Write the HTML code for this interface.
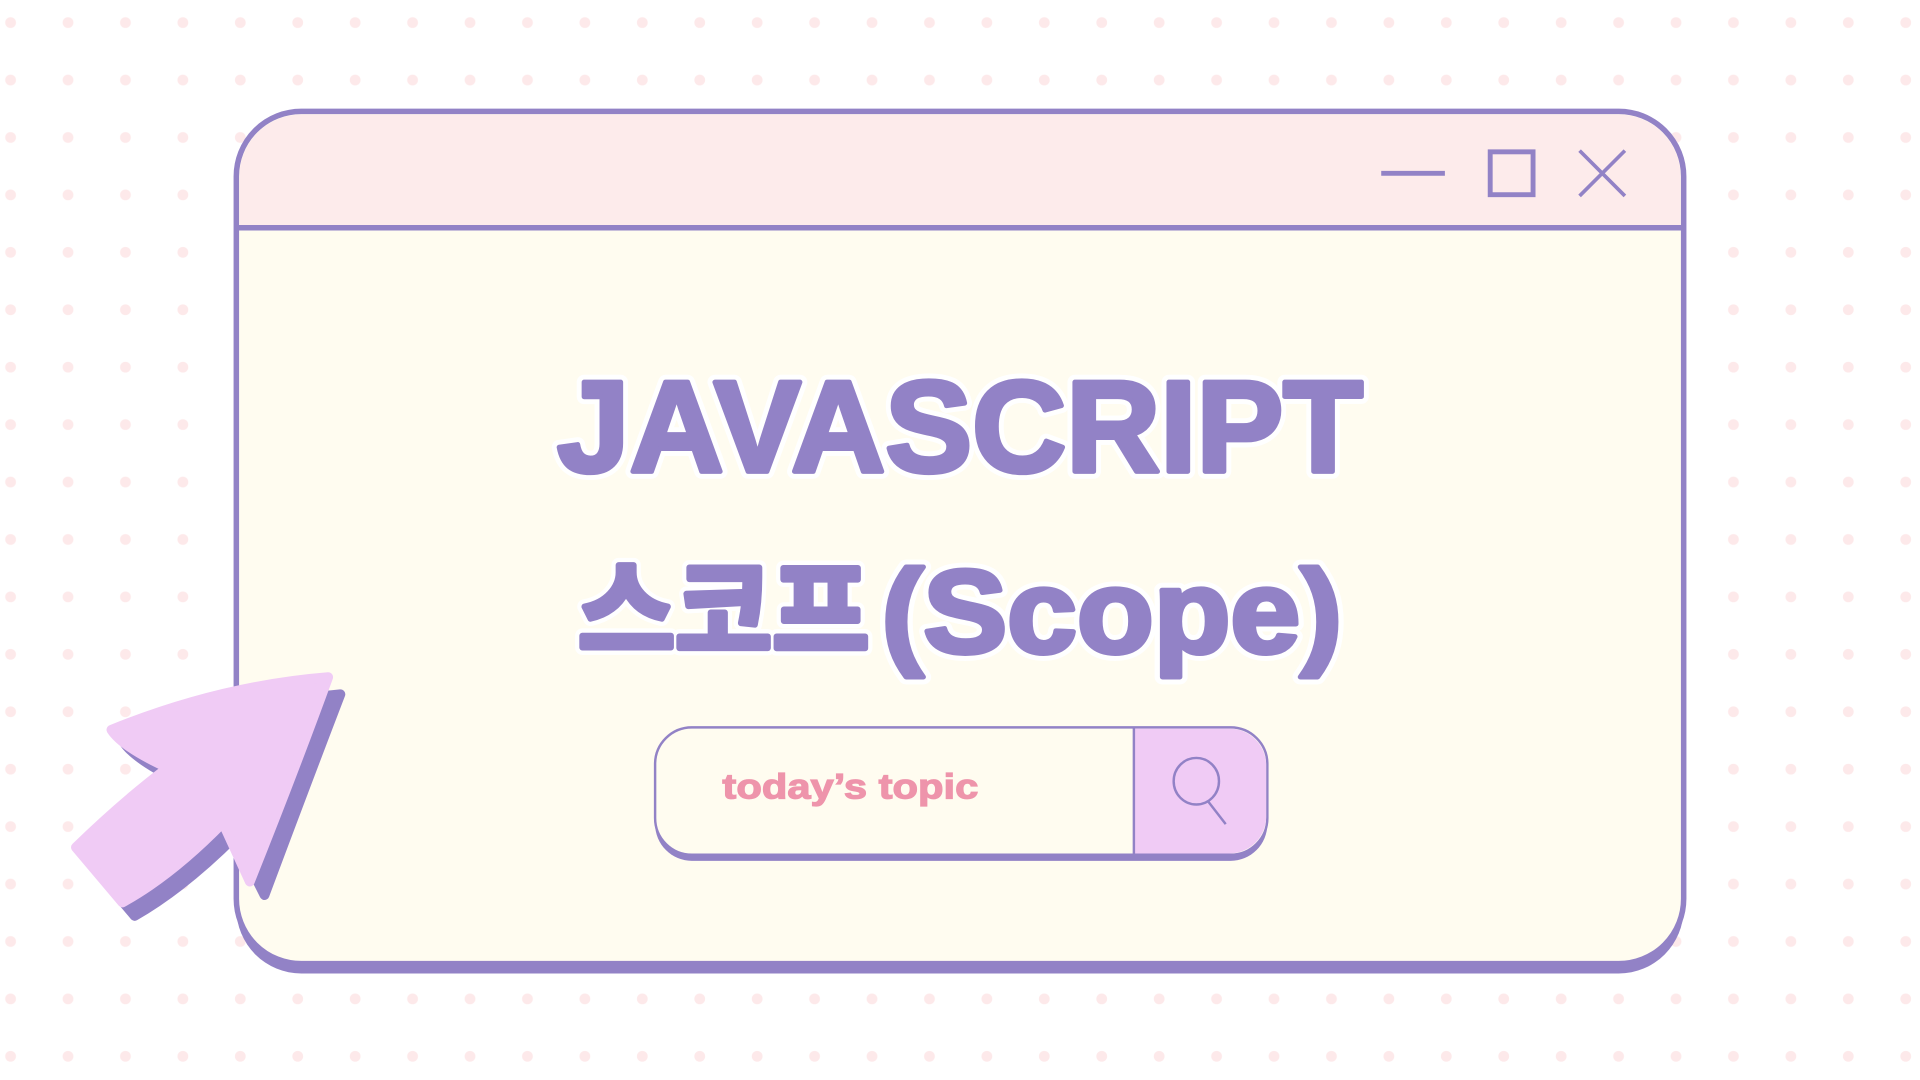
<!DOCTYPE html>
<html><head><meta charset="utf-8"><style>html,body{margin:0;padding:0;background:#fff;overflow:hidden}svg{display:block}</style></head>
<body>
<svg width="1920" height="1080" viewBox="0 0 1568 882" xmlns="http://www.w3.org/2000/svg">
<defs>
<pattern id="d" x="-14.8" y="-5" width="46.9" height="46.9" patternUnits="userSpaceOnUse">
<circle cx="23.45" cy="23.45" r="4.4" fill="#fde9ea"/>
</pattern>
</defs>
<rect width="1568" height="882" fill="#fff"/>
<rect width="1568" height="882" fill="url(#d)"/>
<!-- window -->
<rect x="193" y="99" width="1182" height="696" rx="53" fill="#9282c6"/>
<rect x="193" y="91" width="1182" height="696" rx="53" fill="#fffcf0" stroke="#9282c6" stroke-width="4.5"/>
<path d="M195.5 186 V144 A50.5 50.5 0 0 1 246 93.5 H1322 A50.5 50.5 0 0 1 1372.5 144 V186 Z" fill="#fdebeb"/>
<line x1="193" y1="186" x2="1375" y2="186" stroke="#9282c6" stroke-width="4.5"/>
<!-- controls -->
<line x1="1128" y1="141.5" x2="1180" y2="141.5" stroke="#9282c6" stroke-width="4"/>
<rect x="1217" y="124" width="35" height="35" fill="none" stroke="#9282c6" stroke-width="4"/>
<path d="M1290 123 L1327 160 M1327 123 L1290 160" stroke="#9282c6" stroke-width="3"/>
<!-- titles -->
<g font-family="Liberation Sans, sans-serif" font-weight="bold" stroke-linejoin="round">
<text x="455" y="385" textLength="658" lengthAdjust="spacingAndGlyphs" font-size="106" fill="#fff" stroke="#fff" stroke-width="12">JAVASCRIPT</text>
<text x="455" y="385" textLength="658" lengthAdjust="spacingAndGlyphs" font-size="106" fill="#9282c6" stroke="#9282c6" stroke-width="4">JAVASCRIPT</text>
<text x="472" y="531" textLength="238" lengthAdjust="spacingAndGlyphs" font-family="Noto Sans CJK KR, sans-serif" font-size="88" fill="#fff" stroke="#fff" stroke-width="12">스코프</text>
<text x="472" y="531" textLength="238" lengthAdjust="spacingAndGlyphs" font-family="Noto Sans CJK KR, sans-serif" font-size="88" fill="#9282c6" stroke="#9282c6" stroke-width="5">스코프</text>
<text x="720" y="533" textLength="376" lengthAdjust="spacingAndGlyphs" font-size="96" fill="#fff" stroke="#fff" stroke-width="12">(Scope)</text>
<text x="720" y="533" textLength="376" lengthAdjust="spacingAndGlyphs" font-size="96" fill="#9282c6" stroke="#9282c6" stroke-width="4">(Scope)</text>
</g>
<!-- search -->
<rect x="535" y="597" width="500" height="106" rx="30" fill="#9282c6"/>
<rect x="535" y="594" width="500" height="104" rx="30" fill="#fffcf0" stroke="#9282c6" stroke-width="2"/>
<path d="M926 595 H1004 A30 30 0 0 1 1034 625 V667 A30 30 0 0 1 1004 697 H926 Z" fill="#f0cbf5"/>
<line x1="926" y1="594" x2="926" y2="698" stroke="#9282c6" stroke-width="2"/>
<text x="590" y="652" textLength="209" lengthAdjust="spacingAndGlyphs" font-family="Liberation Sans, sans-serif" font-weight="bold" font-size="29" fill="#ee94ab" stroke="#ee94ab" stroke-width="1">today’s topic</text>
<ellipse cx="977" cy="638" rx="18.5" ry="19" fill="none" stroke="#9282c6" stroke-width="2"/>
<line x1="987" y1="655" x2="1001" y2="673" stroke="#9282c6" stroke-width="2"/>
<!-- cursor -->
<g stroke-linejoin="round">
<path d="M278 567 Q250 640 216 731 L192 683 Q150 725 110 748 L72 703 Q110 665 147 638 Q110 620 101 606 Q190 575 278 567 Z" fill="#9282c6" stroke="#9282c6" stroke-width="8"/>
<path d="M268 553 Q240 630 204 720 L182 672 Q140 715 100 737 L62 692 Q100 655 137 627 Q100 610 91 596 Q180 560 268 553 Z" fill="#f0cbf5" stroke="#f0cbf5" stroke-width="8"/>
</g>
</svg>
</body></html>
